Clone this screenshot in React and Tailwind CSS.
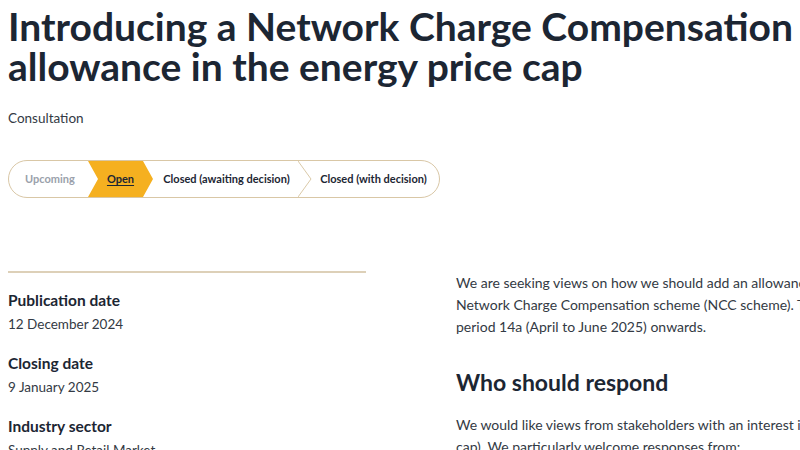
import React from 'react';

const font = { fontFamily: 'Lato, "Open Sans", sans-serif' };

function Stepper() {
  return (
    <div className="flex h-[38px] w-[432px] items-stretch overflow-hidden rounded-full border border-[#d9c7a6] text-[11px] font-bold">
      <div className="flex w-[79px] items-center justify-center pl-[3px] text-[#9aa1ab]">Upcoming</div>
      <div className="relative flex w-[65px] items-center justify-center">
        <svg className="absolute inset-0 h-full w-full" viewBox="0 0 65 38" preserveAspectRatio="none">
          <polygon points="0,0 55,0 65,19 55,38 0,38 10,19" fill="#f5b020" />
        </svg>
        <span className="relative text-[#1c2633] underline underline-offset-2">Open</span>
      </div>
      <div className="flex w-[145px] items-center justify-center pl-[2px] text-[#1c2633]">Closed (awaiting decision)</div>
      <div className="relative w-[14px]">
        <svg className="absolute inset-0 h-full w-full" viewBox="0 0 14 38" preserveAspectRatio="none">
          <polyline points="0,0 13,19 0,38" fill="none" stroke="#d9c7a6" strokeWidth="1" />
        </svg>
      </div>
      <div className="flex flex-1 items-center justify-center pr-[4px] text-[#1c2633]">Closed (with decision)</div>
    </div>
  );
}

function Meta({ label, value }) {
  return (
    <div className="mb-[18px]">
      <div className="text-[15.5px] font-bold leading-[22px] text-[#1c2633]">{label}</div>
      <div className="mt-[3px] text-[13.5px] leading-[20px] text-[#333a44]">{value}</div>
    </div>
  );
}

export default function App() {
  return (
    <div className="h-[450px] w-[800px] overflow-hidden bg-white" style={font}>
      <div className="w-[1400px] pl-[8px]">
        <h1 className="whitespace-nowrap pt-[6px] text-[39px] font-bold leading-[40px] text-[#1c2633]">
          Introducing a Network Charge Compensation
          <br />
          allowance in the energy price cap
        </h1>
        <p className="mt-[22px] text-[13.5px] leading-[20px] text-[#333a44]">Consultation</p>
        <div className="mt-[32px]">
          <Stepper />
        </div>

        <div className="mt-[73px] flex">
          <div className="w-[358px] shrink-0">
            <div className="mb-[16px] h-[2px] bg-[#ddd0b8]" />
            <Meta label="Publication date" value="12 December 2024" />
            <Meta label="Closing date" value="9 January 2025" />
            <Meta label="Industry sector" value="Supply and Retail Market" />
          </div>
          <div className="ml-[90px] shrink-0 pt-[1px] text-[14px] leading-[22px] text-[#333a44]">
            <p className="whitespace-nowrap">We are seeking views on how we should add an allowance to the default tariff cap to account for the</p>
            <p className="whitespace-nowrap">Network Charge Compensation scheme (NCC scheme). The allowance would apply from charge restriction</p>
            <p className="whitespace-nowrap">period 14a (April to June 2025) onwards.</p>
            <h2 className="mt-[30px] text-[23px] font-bold leading-[28px] text-[#1c2633]">Who should respond</h2>
            <p className="mt-[18px] whitespace-nowrap">We would like views from stakeholders with an interest in the default tariff cap (price</p>
            <p className="whitespace-nowrap">cap). We particularly welcome responses from:</p>
          </div>
        </div>
      </div>
    </div>
  );
}
